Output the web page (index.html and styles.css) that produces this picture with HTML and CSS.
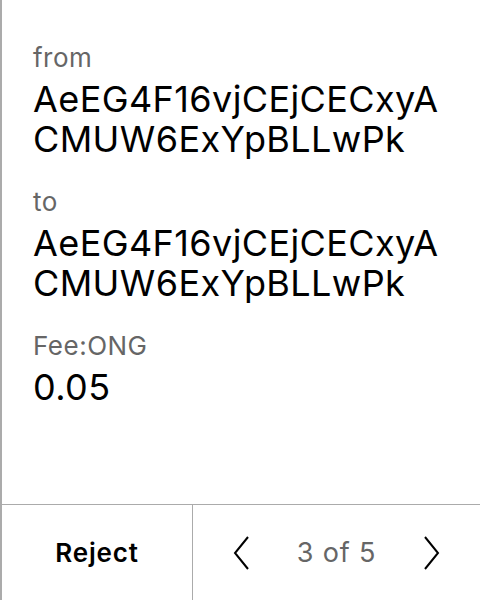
FILE: index.html
```html
<!DOCTYPE html>
<html>
<head>
<meta charset="utf-8">
<link rel="stylesheet" href="styles.css">
</head>
<body>
<div class="card">
  <div class="content">
    <div class="field">
      <div class="label">from</div>
      <div class="value">AeEG4F16vjCEjCECxyACMUW6ExYpBLLwPk</div>
    </div>
    <div class="field">
      <div class="label">to</div>
      <div class="value">AeEG4F16vjCEjCECxyACMUW6ExYpBLLwPk</div>
    </div>
    <div class="field">
      <div class="label">Fee:ONG</div>
      <div class="value">0.05</div>
    </div>
  </div>
  <div class="footer">
    <div class="reject">Reject</div>
    <div class="pager">
      <svg class="chev" width="16" height="34" viewBox="0 0 16 34"><polyline points="15,1 2,17 15,33" fill="none" stroke="#000" stroke-width="2"/></svg>
      <span class="count">3 of 5</span>
      <svg class="chev" width="16" height="34" viewBox="0 0 16 34"><polyline points="1,1 14,17 1,33" fill="none" stroke="#000" stroke-width="2"/></svg>
    </div>
  </div>
</div>
</body>
</html>
```
FILE: styles.css
```css
html, body {
  margin: 0;
  padding: 0;
  background: #fff;
}
.card {
  width: 480px;
  height: 600px;
  box-sizing: border-box;
  border-left: 2px solid #ababab;
  display: flex;
  flex-direction: column;
  font-family: Inter, "Noto Sans", sans-serif;
}
.content {
  flex: 1;
  padding: 41px 31px 0 31px;
  display: flex;
  flex-direction: column;
  gap: 26px;
}
.label {
  font-size: 26px;
  line-height: 34px;
  letter-spacing: 0.5px;
  color: #666;
}
.value {
  font-size: 36px;
  line-height: 40px;
  letter-spacing: 0.4px;
  color: #000;
  word-break: break-all;
  margin-top: 4px;
}
.footer {
  height: 95px;
  border-top: 1px solid #ababab;
  display: flex;
}
.reject {
  width: 190px;
  border-right: 1px solid #ababab;
  display: flex;
  align-items: center;
  justify-content: center;
  font-size: 26px;
  font-weight: 600;
  letter-spacing: 0.8px;
  color: #000;
}
.pager {
  flex: 1;
  display: flex;
  align-items: center;
  justify-content: center;
  gap: 48px;
}
.count {
  font-size: 27px;
  letter-spacing: 0.8px;
  color: #666;
}
```
